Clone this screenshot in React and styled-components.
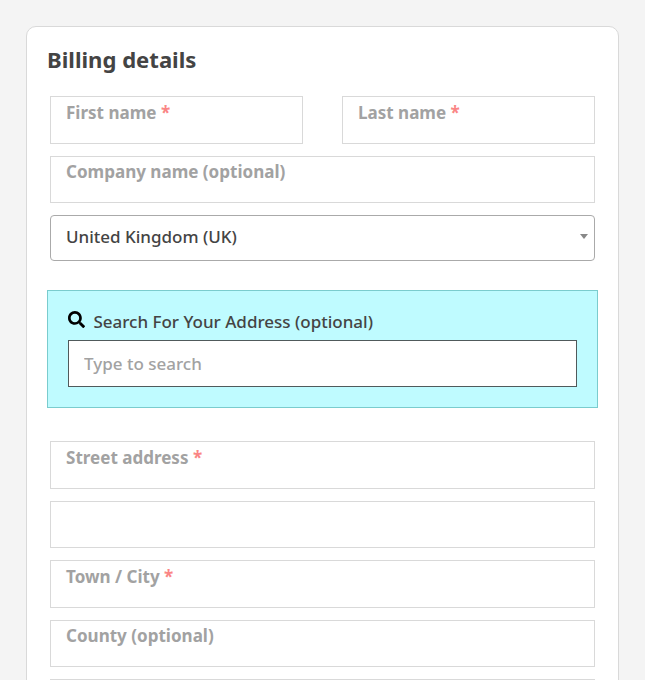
import styled, { createGlobalStyle } from "styled-components";
import { FaSearch } from "react-icons/fa";

const Field = ({ label, required, compact }) => (
  <FieldBox $compact={compact}>
    {label && (
      <FieldLabel>
        {label} {required && <Required>*</Required>}
      </FieldLabel>
    )}
  </FieldBox>
);

const AddressSearch = () => (
  <SearchPanel>
    <SearchLabel htmlFor="address-search">
      <FaSearch />
      <span>Search For Your Address (optional)</span>
    </SearchLabel>
    <SearchInput id="address-search" placeholder="Type to search" />
  </SearchPanel>
);

const App = () => (
  <>
    <GlobalStyle />
    <Page>
      <Card>
        <Title>Billing details</Title>

        <Fields>
          <NameRow>
            <Field label="First name" required />
            <Field label="Last name" required />
          </NameRow>
          <Field label="Company name (optional)" compact />
          <CountrySelect>
            <span>United Kingdom (UK)</span>
            <Arrow />
          </CountrySelect>
        </Fields>

        <AddressSearch />

        <Fields>
          <Field label="Street address" required />
          <Field compact />
          <Field label="Town / City" required />
          <Field label="County (optional)" compact />
          <Field />
        </Fields>
      </Card>
    </Page>
  </>
);

export default App;

const GlobalStyle = createGlobalStyle`
  * {
    box-sizing: border-box;
  }

  body {
    margin: 0;
    background: #f4f4f4;
    color: #444;
    font-family: "Noto Sans", sans-serif;
    font-size: 17px;
  }
`;

const Page = styled.main`
  height: 680px;
  padding: 26px 26px 0;
  overflow: hidden;
`;

const Card = styled.section`
  height: 760px;
  padding: 17px 23px 0;
  background: #fff;
  border: 1px solid #d9d9d9;
  border-radius: 10px;
`;

const Title = styled.h1`
  margin: 0 0 22px -3px;
  font-size: 22.1px;
  font-weight: 700;
  line-height: 30px;
`;

const Fields = styled.div`
  display: flex;
  flex-direction: column;
  gap: 12px;
`;

const NameRow = styled.div`
  display: grid;
  grid-template-columns: 1fr 1fr;
  gap: 39px;
`;

const FieldBox = styled.div`
  height: ${({ $compact }) => ($compact ? 47 : 48)}px;
  padding: ${({ $compact }) => ($compact ? 3 : 4)}px 15px;
  border: 1px solid #d9d9d9;
`;

const FieldLabel = styled.label`
  display: block;
  color: #a2a2a2;
  font-size: 17.05px;
  font-weight: 700;
  line-height: 23px;
`;

const Required = styled.span`
  color: #fa8585;
`;

const CountrySelect = styled.div`
  display: flex;
  justify-content: space-between;
  align-items: center;
  height: 46px;
  padding: 0 6px 3px 15px;
  border: 1px solid #aaa;
  border-radius: 4px;
  font-weight: 500;
`;

const Arrow = styled.span`
  border-style: solid;
  border-color: #888 transparent transparent;
  border-width: 5px 4px 0;
`;

const SearchPanel = styled.div`
  height: 118px;
  margin: 29px -3px 33px;
  padding: 19px 20px 0;
  background: #bffbff;
  border: 1px solid #7accce;
`;

const SearchLabel = styled.label`
  display: flex;
  gap: 8.4px;
  height: 30px;
  font-weight: 500;
  line-height: 24px;

  svg {
    width: 17px;
    height: 17px;
    margin-top: 1px;
    color: #000;
  }
`;

const SearchInput = styled.input`
  display: block;
  width: 100%;
  height: 47px;
  padding: 0 15px;
  background: #fff;
  border: 1px solid #505a5b;
  border-radius: 0;
  font: inherit;
  font-weight: 500;

  &::placeholder {
    color: #a2a2a2;
  }
`;
